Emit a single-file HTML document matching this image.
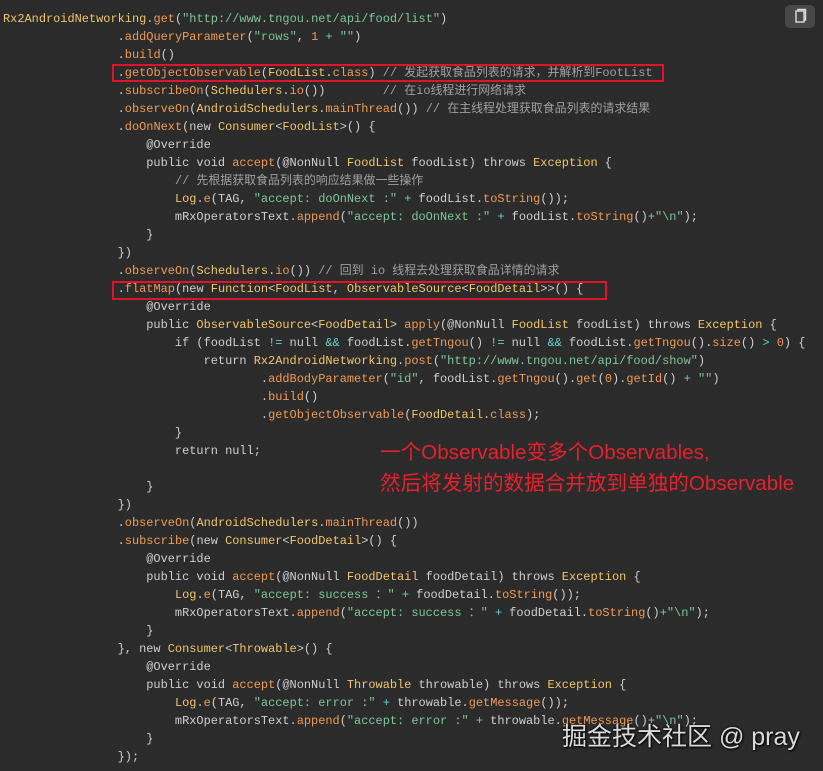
<!DOCTYPE html>
<html><head><meta charset="utf-8"><style>
html,body{margin:0;padding:0;background:#2b2b2b;width:823px;height:771px;overflow:hidden}
pre{margin:0;position:absolute;left:3px;top:10px;font-family:"Liberation Mono","Noto Sans CJK SC",monospace;font-size:11.95px;line-height:18px;color:#cfcfcf;white-space:pre}
.f{color:#ef9a55}.c{color:#f1c56a}.s{color:#7ec699}.o{color:#67cdcc}.m{color:#a0a0a0}.n{color:#ef9a55}
.box{position:absolute;border:2px solid #e0132a;box-sizing:border-box}
.ann{position:absolute;left:380px;font-family:"Liberation Sans","Noto Sans CJK SC",sans-serif;font-size:20.6px;color:#e6202c;line-height:32px}
.copy{position:absolute;left:785px;top:5px;width:30px;height:23px;background:#484848;border-radius:5px}
.wm{position:absolute;left:562px;top:717px;font-family:"Liberation Sans","Noto Sans CJK SC",sans-serif;font-size:25px;color:rgba(255,255,255,.85);text-shadow:0 0 2px #000,1px 1px 2px #000}
</style></head><body>
<pre><span class="c">Rx2AndroidNetworking</span>.<span class="f">get</span>(<span class="s">"http://www.tngou.net/api/food/list"</span>)
                .<span class="f">addQueryParameter</span>(<span class="s">"rows"</span>, <span class="n">1</span> <span class="o">+</span> <span class="s">""</span>)
                .<span class="f">build</span>()
                .<span class="f">getObjectObservable</span>(<span class="c">FoodList</span>.<span class="f">class</span>) <span class="m">// 发起获取食品列表的请求，并解析到FootList</span>
                .<span class="f">subscribeOn</span>(<span class="c">Schedulers</span>.<span class="f">io</span>())        <span class="m">// 在io线程进行网络请求</span>
                .<span class="f">observeOn</span>(<span class="c">AndroidSchedulers</span>.<span class="f">mainThread</span>()) <span class="m">// 在主线程处理获取食品列表的请求结果</span>
                .<span class="f">doOnNext</span>(new <span class="c">Consumer</span>&lt;<span class="c">FoodList</span>&gt;() {
                    @Override
                    public void <span class="f">accept</span>(@NonNull <span class="c">FoodList</span> foodList) throws <span class="c">Exception</span> {
                        <span class="m">// 先根据获取食品列表的响应结果做一些操作</span>
                        <span class="c">Log</span>.<span class="f">e</span>(TAG, <span class="s">"accept: doOnNext :"</span> <span class="o">+</span> foodList.<span class="f">toString</span>());
                        mRxOperatorsText.<span class="f">append</span>(<span class="s">"accept: doOnNext :"</span> <span class="o">+</span> foodList.<span class="f">toString</span>()<span class="o">+</span><span class="s">"\n"</span>);
                    }
                })
                .<span class="f">observeOn</span>(<span class="c">Schedulers</span>.<span class="f">io</span>()) <span class="m">// 回到 io 线程去处理获取食品详情的请求</span>
                .<span class="f">flatMap</span>(new <span class="c">Function</span>&lt;<span class="c">FoodList</span>, <span class="c">ObservableSource</span>&lt;<span class="c">FoodDetail</span>&gt;&gt;() {
                    @Override
                    public <span class="c">ObservableSource</span>&lt;<span class="c">FoodDetail</span>&gt; <span class="f">apply</span>(@NonNull <span class="c">FoodList</span> foodList) throws <span class="c">Exception</span> {
                        if (foodList <span class="o">!=</span> null <span class="o">&amp;&amp;</span> foodList.<span class="f">getTngou</span>() <span class="o">!=</span> null <span class="o">&amp;&amp;</span> foodList.<span class="f">getTngou</span>().<span class="f">size</span>() <span class="o">&gt;</span> <span class="n">0</span>) {
                            return <span class="c">Rx2AndroidNetworking</span>.<span class="f">post</span>(<span class="s">"http://www.tngou.net/api/food/show"</span>)
                                    .<span class="f">addBodyParameter</span>(<span class="s">"id"</span>, foodList.<span class="f">getTngou</span>().<span class="f">get</span>(<span class="n">0</span>).<span class="f">getId</span>() <span class="o">+</span> <span class="s">""</span>)
                                    .<span class="f">build</span>()
                                    .<span class="f">getObjectObservable</span>(<span class="c">FoodDetail</span>.<span class="f">class</span>);
                        }
                        return null;

                    }
                })
                .<span class="f">observeOn</span>(<span class="c">AndroidSchedulers</span>.<span class="f">mainThread</span>())
                .<span class="f">subscribe</span>(new <span class="c">Consumer</span>&lt;<span class="c">FoodDetail</span>&gt;() {
                    @Override
                    public void <span class="f">accept</span>(@NonNull <span class="c">FoodDetail</span> foodDetail) throws <span class="c">Exception</span> {
                        <span class="c">Log</span>.<span class="f">e</span>(TAG, <span class="s">"accept: success ："</span> <span class="o">+</span> foodDetail.<span class="f">toString</span>());
                        mRxOperatorsText.<span class="f">append</span>(<span class="s">"accept: success ："</span> <span class="o">+</span> foodDetail.<span class="f">toString</span>()<span class="o">+</span><span class="s">"\n"</span>);
                    }
                }, new <span class="c">Consumer</span>&lt;<span class="c">Throwable</span>&gt;() {
                    @Override
                    public void <span class="f">accept</span>(@NonNull <span class="c">Throwable</span> throwable) throws <span class="c">Exception</span> {
                        <span class="c">Log</span>.<span class="f">e</span>(TAG, <span class="s">"accept: error :"</span> <span class="o">+</span> throwable.<span class="f">getMessage</span>());
                        mRxOperatorsText.<span class="f">append</span>(<span class="s">"accept: error :"</span> <span class="o">+</span> throwable.<span class="f">getMessage</span>()<span class="o">+</span><span class="s">"\n"</span>);
                    }
                });</pre>
<div class="box" style="left:112px;top:64px;width:552px;height:18px"></div>
<div class="box" style="left:112px;top:281px;width:495px;height:19px"></div>
<div class="ann" style="top:437px">一个Observable变多个Observables,</div>
<div class="ann" style="top:468px">然后将发射的数据合并放到单独的Observable</div>
<div class="copy"><svg width="30" height="23" viewBox="0 0 30 23"><rect x="11" y="6" width="8" height="11" fill="none" stroke="#ddd" stroke-width="1.4"/><path d="M13 6V4.5h7.5V15H19" fill="none" stroke="#ddd" stroke-width="1.4"/></svg></div>
<div class="wm">掘金技术社区 @ pray</div>
</body></html>
